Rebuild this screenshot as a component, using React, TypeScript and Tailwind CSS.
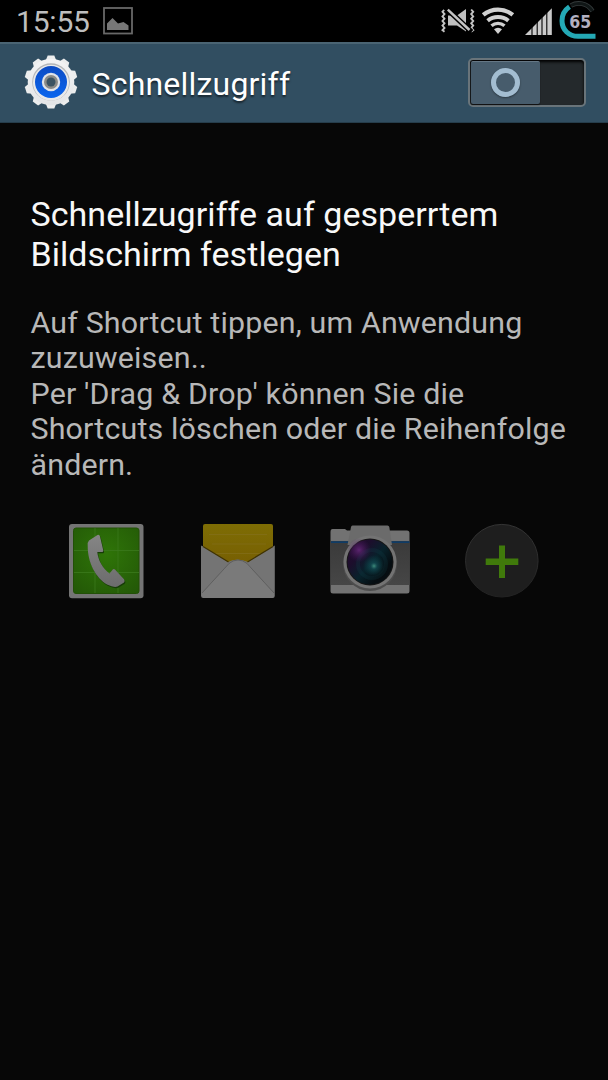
import type { ReactNode } from "react";

const TEETH = Array.from({ length: 10 }, (_, i) => i * 36);

function StatusIcons() {
  return (
    <svg viewBox="430 0 178 42" className="h-[42px] w-[178px]">
      {/* vibrate / muted */}
      <g fill="none" stroke="#c4c4c4" strokeWidth="1.900">
        <path d="M444.500 9.500l-2 2.300 2 2.300-2 2.300 2 2.300-2 2.300 2 2.300-2 2.300 2 2.300-2 2.300 2 1.500" />
        <path d="M471.200 9.500l2 2.300-2 2.300 2 2.300-2 2.300 2 2.300-2 2.300 2 2.300-2 2.300 2 2.300-2 1.500" />
      </g>
      <path d="M448 15.500H457L466 9V31.500L457 25.500H448Z" fill="#c0c0c0" />
      <path d="M445 7L471.500 32" stroke="#000" strokeWidth="5.200" />
      <path d="M447.800 9.600L469.500 30" stroke="#c4c4c4" strokeWidth="2.500" />
      {/* wifi */}
      <g fill="none" stroke="#d0d0d0" strokeWidth="4.400">
        <path d="M483.200 14.900A23.500 23.500 0 0 1 512.800 14.900" />
        <path d="M487.600 20.700A16.500 16.500 0 0 1 508.400 20.700" strokeWidth="4" />
        <path d="M491.500 25.800A10 10 0 0 1 504.500 25.800" strokeWidth="3.400" />
      </g>
      <path d="M498 34l-4-4.700a6 6 0 0 1 8 0z" fill="#d0d0d0" />
      {/* signal */}
      <path d="M525 35L551.800 8.200V35Z" fill="#cacaca" />
      <path d="M532 20v16M537.200 15v21M542 10v26M546.800 5v31" stroke="#000" strokeWidth="1.100" />
      {/* battery ring */}
      <path d="M571 5.500C577 2 587 2.500 592.500 11" fill="none" stroke="#353b3c" strokeWidth="4.600" />
      <path d="M571 5.500C577 2 587 2.500 592.500 11" fill="none" stroke="#101616" strokeWidth="3" />
      <path d="M569.500 6.800C564 10.500 562 15.500 562 20.800C562 30 569 36.300 578 36.300H595.500" fill="none" stroke="#24a9b5" strokeWidth="5" />
      <text x="580.2" y="28" textAnchor="middle" textLength="22" lengthAdjust="spacingAndGlyphs" fill="#b3b0c0" className="font-['DejaVu_Sans'] text-[17px] font-bold">65</text>
    </svg>
  );
}

function PictureIcon() {
  return (
    <svg viewBox="0 0 30 28" className="ml-[13px] mt-[7px] h-7 w-[30px]">
      <rect x="1" y="1" width="28" height="25.500" fill="none" stroke="#686868" strokeWidth="1.800" />
      <path d="M4 23V16.500L9.500 11L15 16.500L20.500 15L25.500 18.500V23z" fill="#777" />
    </svg>
  );
}

function GearIcon() {
  return (
    <svg viewBox="-28 -28 56 56" className="-mt-[2px] ml-[23px] h-14 w-14">
      <defs>
        <linearGradient id="gear" x1="0" y1="0" x2="0" y2="1">
          <stop offset="0" stopColor="#f4f4f4" />
          <stop offset="1" stopColor="#e3e5e7" />
        </linearGradient>
        <linearGradient id="blue" x1="0" y1="0" x2="0" y2="1">
          <stop offset="0" stopColor="#0c4bc4" />
          <stop offset="1" stopColor="#0b66ee" />
        </linearGradient>
      </defs>
      <g fill="#eceded">
        {TEETH.map((a) => (
          <path key={a} d="M-5.500-21L-3.300-26.500H3.300L5.500-21Z" transform={`rotate(${a})`} />
        ))}
      </g>
      <circle r="23.300" fill="url(#gear)" />
      <circle r="18.800" fill="#b3b5b7" />
      <circle cy="0.700" r="18" fill="#e8e9ea" />
      <circle r="16" fill="url(#blue)" />
      <circle r="9.200" fill="#e0e3e8" />
      <circle r="7" fill="#8b8b88" />
      <circle r="4.500" fill="#3c5362" />
    </svg>
  );
}

function PhoneIcon() {
  return (
    <svg viewBox="50 510 120 100" className="h-[100px] w-[120px]">
      <defs>
        <radialGradient id="green" cx=".5" cy=".4" r=".75">
          <stop offset="0" stopColor="#2f7508" />
          <stop offset="1" stopColor="#235807" />
        </radialGradient>
        <linearGradient id="handset" x1="0" y1="0" x2="0" y2="1">
          <stop offset="0" stopColor="#858585" />
          <stop offset="1" stopColor="#6c6c6c" />
        </linearGradient>
      </defs>
      <rect x="69" y="524" width="74.500" height="74.300" rx="3" fill="#747474" />
      <rect x="73.500" y="528" width="65.500" height="65.500" rx="2.500" fill="url(#green)" stroke="#225007" />
      <path d="M95 528v65M118 528v65M74 550.500h65M74 572.500h65" stroke="#3b7a1d" strokeWidth=".8" />
      <path d="M89 540.500L97.500 535Q99.500 534.300 100 536.500L103.300 550.500Q103.400 552 102 552H97.300C98 560 103 569 109.500 573.500L113 569.300Q114 568.600 115 569.500L124 579.300Q125.300 581 124 582.500L117.500 586.500Q114 588 107 584.500C96 578 87.500 563 87.700 545.500Q87.500 542 89 540.500Z" fill="#173d07" transform="translate(.8 1.2)" />
      <path d="M89 540.500L97.500 535Q99.500 534.300 100 536.500L103.300 550.500Q103.400 552 102 552H97.300C98 560 103 569 109.500 573.500L113 569.300Q114 568.600 115 569.500L124 579.300Q125.300 581 124 582.500L117.500 586.500Q114 588 107 584.500C96 578 87.500 563 87.700 545.500Q87.500 542 89 540.500Z" fill="url(#handset)" />
    </svg>
  );
}

function MailIcon() {
  return (
    <svg viewBox="185 510 110 100" className="h-[100px] w-[110px]">
      <defs>
        <linearGradient id="paper" x1="0" y1="0" x2="0" y2="1">
          <stop offset="0" stopColor="#7e6d04" />
          <stop offset="1" stopColor="#755b02" />
        </linearGradient>
      </defs>
      <path d="M205 524H271Q273 524 273 526V575H203V526Q203 524 205 524Z" fill="url(#paper)" />
      <path d="M209 534.500h58M212 544h54M209 553.500h60" stroke="#847020" strokeWidth=".6" />
      <path d="M201.500 545.500L228 562Q237 557 248 562L274.800 545.500V596Q274.800 598 272.500 598H203.500Q201 598 201 596V546.500Z" fill="#747474" />
      <path d="M203 546.500L228.500 562M273 546.500L247.500 562" stroke="#3f3203" strokeWidth="1.200" />
      <path d="M202 593L229 563.500Q233 560 238 560Q243 560 247 563.500L274 593V596Q274 598 272 598H204Q202 598 202 596Z" fill="#7a7a7a" />
      <path d="M202 593L229 563.500Q233 560 238 560Q243 560 247 563.500L274 593" fill="none" stroke="#5c5c5c" strokeWidth=".9" />
    </svg>
  );
}

function CameraIcon() {
  return (
    <svg viewBox="315 510 110 100" className="h-[100px] w-[110px]">
      <defs>
        <linearGradient id="lens" x1=".1" y1=".1" x2=".8" y2=".7">
          <stop offset="0" stopColor="#240b30" />
          <stop offset=".3" stopColor="#1c0e2c" />
          <stop offset=".65" stopColor="#08222b" />
          <stop offset="1" stopColor="#060d11" />
        </linearGradient>
        <radialGradient id="violet"><stop offset="0" stopColor="#6b2b80" /><stop offset="1" stopColor="#4b175e" stopOpacity="0" /></radialGradient>
        <radialGradient id="teal"><stop offset="0" stopColor="#3e8c7c" /><stop offset=".3" stopColor="#145158" stopOpacity=".7" /><stop offset="1" stopColor="#0c4750" stopOpacity="0" /></radialGradient>
        <linearGradient id="grip" x1="0" y1="0" x2="0" y2="1"><stop offset="0" stopColor="#3a3a3a" /><stop offset="1" stopColor="#464646" /></linearGradient>
      </defs>
      <path d="M332.500 529H345L347 530.500H407Q409.500 530.500 409.500 533V591Q409.500 593.500 407 593.500H333Q330.500 593.500 330.500 591V532Q330.500 529 332.500 529Z" fill="#727272" />
      <path d="M331 541h78.500v44H331z" fill="url(#grip)" />
      <path d="M331 541.300h78.500v1.800H331z" fill="#103c66" />
      <path d="M352.500 525.500H387.500Q389 525.500 389.300 527L392 545H347.500L351 527Q351.300 525.500 352.500 525.500Z" fill="#6b6b6b" />
      <circle cx="370" cy="564" r="27" fill="#4d4d4d" />
      <circle cx="370" cy="562" r="26.500" fill="#737373" />
      <circle cx="370" cy="562" r="23.500" fill="#151515" />
      <circle cx="370" cy="562" r="22.500" fill="url(#lens)" />
      <circle cx="372" cy="564" r="14" fill="none" stroke="#124650" strokeWidth="4" opacity=".2" />
      <circle cx="359" cy="550" r="12" fill="url(#violet)" opacity=".8" />
      <circle cx="374" cy="566" r="11" fill="url(#teal)" />
    </svg>
  );
}

function AddIcon() {
  return (
    <svg viewBox="450 510 110 100" className="h-[100px] w-[110px]">
      <defs>
        <linearGradient id="rim" x1="0" y1="0" x2="0" y2="1"><stop offset="0" stopColor="#343434" /><stop offset="1" stopColor="#222" /></linearGradient>
      </defs>
      <circle cx="501.800" cy="560.700" r="36.300" fill="#1e1e1e" stroke="url(#rim)" />
      <path d="M499 545.500h6v13h13.300v6.500H505v13h-6v-13h-13.300v-6.500H499z" fill="#407a0b" />
    </svg>
  );
}

function Line({ children }: { children: ReactNode }) {
  return <span className="block whitespace-nowrap">{children}</span>;
}

export default function App() {
  return (
    <div className="flex h-[1080px] w-[608px] flex-col overflow-hidden bg-[#070707] font-['Roboto',sans-serif]">
      <header className="flex h-[42px] shrink-0 items-start justify-between bg-black">
        <div className="flex">
          <span className="ml-4 mt-1 whitespace-nowrap text-[30px] leading-[35px] tracking-[-0.2px] text-[#bebebe]">15:55</span>
          <PictureIcon />
        </div>
        <StatusIcons />
      </header>

      <div className="flex h-[81px] shrink-0 items-center border-b border-t-2 border-b-[#263d4b] border-t-[#4a6473] bg-[#314e61]">
        <GearIcon />
        <h1 className="ml-[12.500px] mt-[2px] whitespace-nowrap text-[32px] leading-[38px] tracking-[0.2px] text-white [text-shadow:0_2px_2px_#0008]">Schnellzugriff</h1>
        <button aria-label="Schnellzugriff" className="ml-auto mr-[22px] flex h-[49px] w-[118px] -translate-y-px rounded-[5px] border-2 border-[#69747a] bg-[#24292c] p-px shadow-[inset_0_2px_3px_#000]">
          <span className="flex h-[43px] w-[69px] items-center justify-center rounded-[2px] border-t border-[#657785] bg-[#475c6c] shadow-[0_1px_1px_#111]">
            <span className="h-[29px] w-[29px] rounded-full border-[5px] border-[#a3bdd1] shadow-[0_1px_2px_#0006]" />
          </span>
        </button>
      </div>

      <main className="flex flex-col pl-[30.500px] pt-[71px]">
        <h2 className="text-[34px] leading-[40px] tracking-[0.05px] text-[#f8f8f8]">
          <Line>Schnellzugriffe auf gesperrtem</Line>
          <Line>Bildschirm festlegen</Line>
        </h2>
        <p className="mt-[31px] text-[30.400px] leading-[35.400px] tracking-[0.16px] text-[#b8b8b8]">
          <Line>Auf Shortcut tippen, um Anwendung</Line>
          <Line>zuzuweisen..</Line>
          <Line>Per 'Drag &amp; Drop' können Sie die</Line>
          <Line>Shortcuts löschen oder die Reihenfolge</Line>
          <Line>ändern.</Line>
        </p>
        <div className="ml-[19.500px] mt-[28px] flex">
          <PhoneIcon />
          <div className="ml-[15px]"><MailIcon /></div>
          <div className="ml-[20px]"><CameraIcon /></div>
          <div className="ml-[25px]"><AddIcon /></div>
        </div>
      </main>
    </div>
  );
}
